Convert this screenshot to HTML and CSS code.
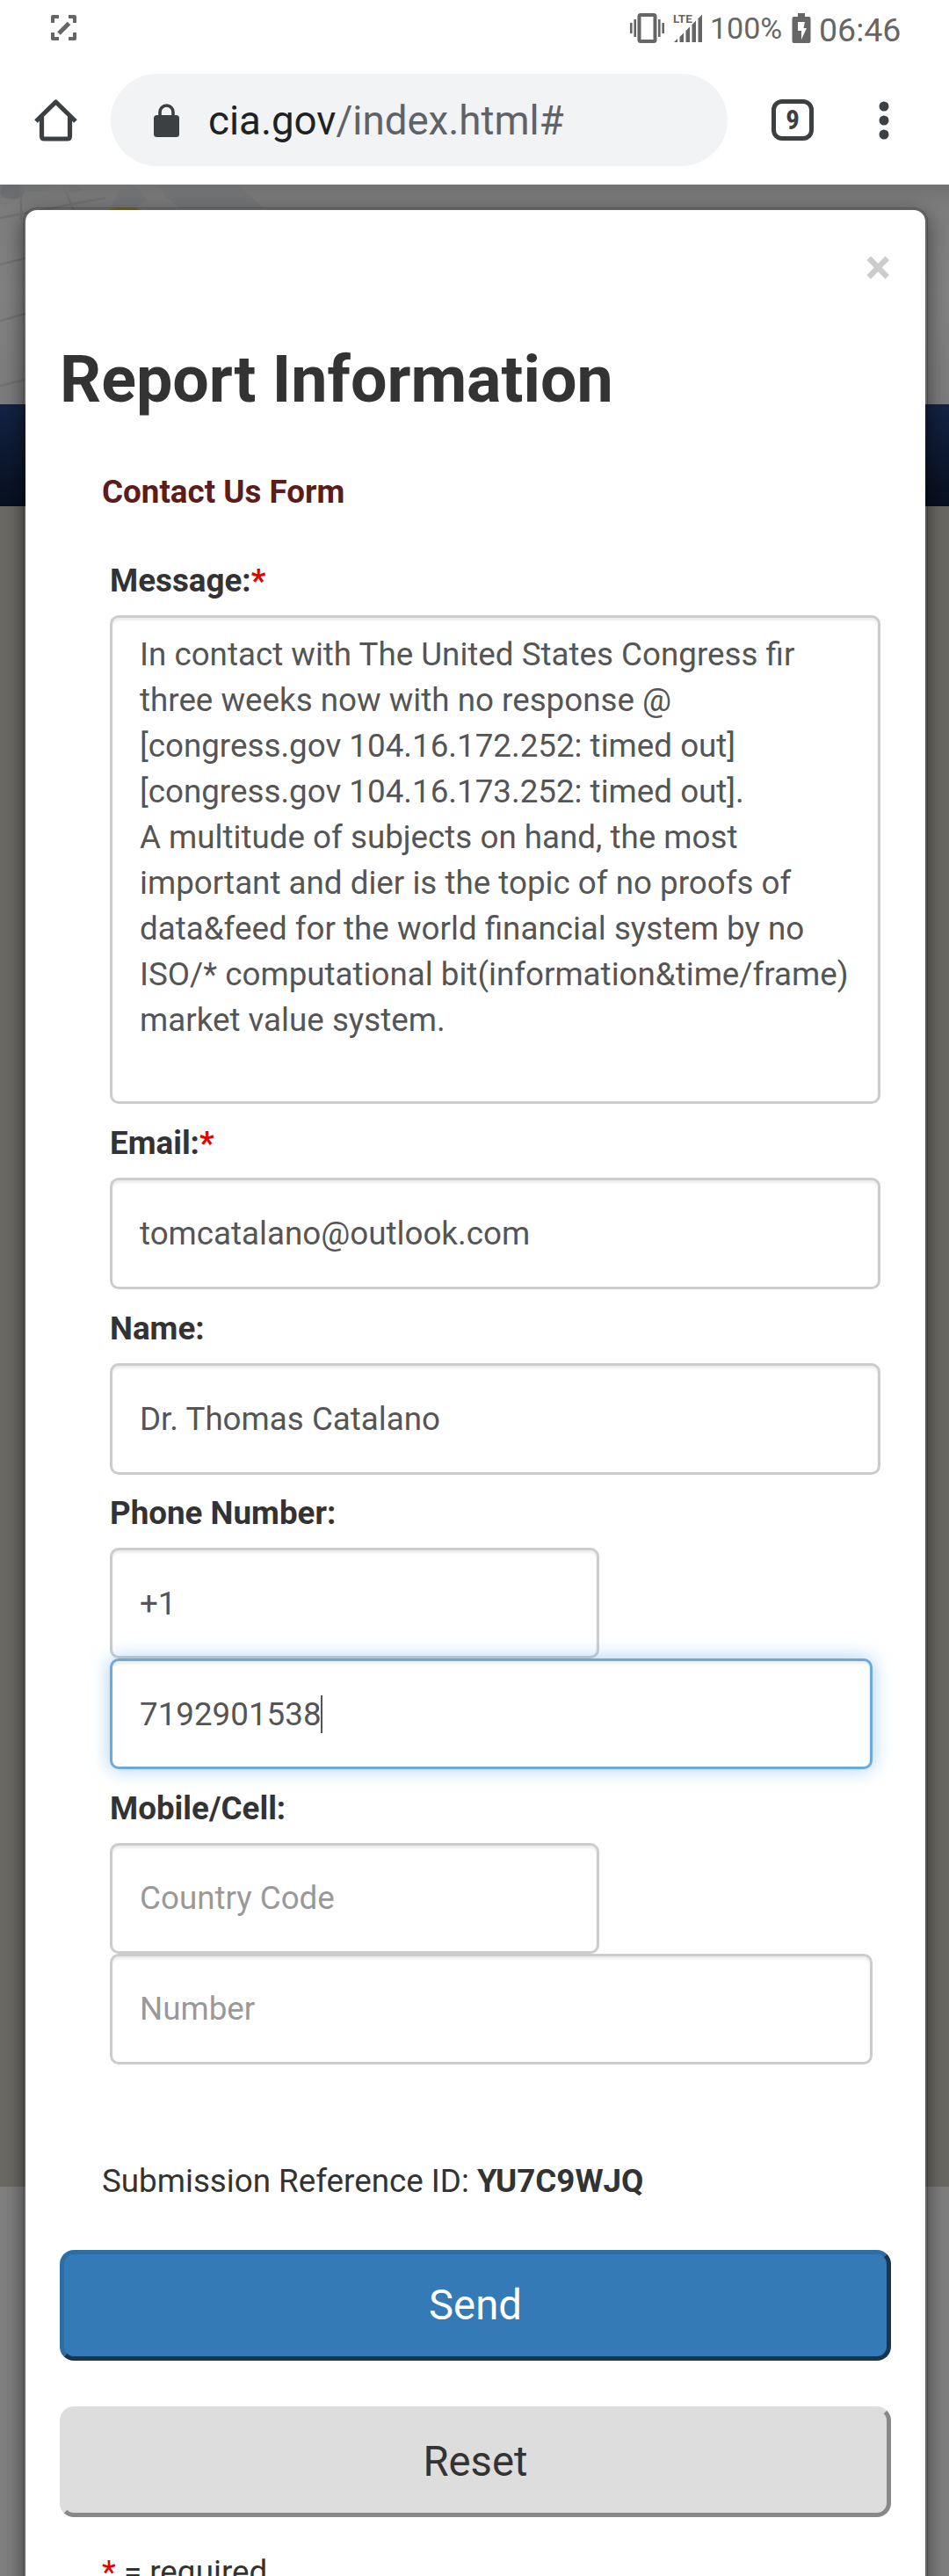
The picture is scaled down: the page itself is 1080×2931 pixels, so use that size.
FILE: index.html
```html
<!DOCTYPE html>
<html lang="en">
<head>
<meta charset="utf-8">
<title>Report Information</title>
<link rel="stylesheet" href="styles.css">
</head>
<body>
<header class="chrome">
  <div class="status">
    <svg class="capture" width="29" height="29" viewBox="0 0 29 29" fill="none" stroke="#666" stroke-width="4"><path d="M2 9V2h7M20 2h7v7M27 20v7h-7M9 27H2v-7" stroke-linejoin="round"/><path d="M9 21 20.500 9.500" stroke-width="5"/></svg>
    <svg class="vibrate" width="39" height="34" viewBox="0 0 39 34" fill="none" stroke="#666"><rect x="10.500" y="2" width="18" height="30" rx="1.500" stroke-width="4"/><path d="M1.300 11v12M5.700 7v20M33.300 7v20M37.700 11v12" stroke-width="2.600"/></svg>
    <svg class="signal" width="34" height="33" viewBox="0 0 34 33" fill="#666"><text x="0" y="10" class="lte">LTE</text><path d="M1 32 5 28v4zM7.500 26l4.500-4.500V32H7.500zM14.500 19l4.500-4.500V32h-4.500zM21.500 12 26 7.500V32h-4.500zM28.500 5 33 .5V32h-4.500z"/></svg>
    <span class="percent">100%</span>
    <svg class="battery" width="22" height="34" viewBox="0 0 22 34"><path fill="#666" d="M7 0h8v4h4.500q2 0 2 2v26q0 2-2 2h-17q-2 0-2-2V6q0-2 2-2H7z"/><path fill="#fff" d="M7 10h8l-1.500 7H17l-6 13v-10H7z"/></svg>
    <span class="time">06:46</span>
  </div>
  <div class="toolbar">
    <svg class="home" width="49" height="49" viewBox="0 0 49 49" fill="none" stroke="#3c4043" stroke-width="5.200"><path d="M2 26 24.500 4 47 26" stroke-linejoin="round"/><path d="M8.500 21v22q0 3 3 3h26q3 0 3-3V21"/></svg>
    <div class="omnibox">
      <svg class="lock" width="29" height="38" viewBox="0 0 29 38"><rect y="13" width="29" height="25" rx="3.500" fill="#3c4043"/><path d="M7 14V9.500a7.500 7.500 0 0 1 15 0V14" fill="none" stroke="#3c4043" stroke-width="3.600"/></svg>
      <span class="url">cia.gov<span class="path">/index.html#</span></span>
    </div>
    <div class="tabs">9</div>
    <svg class="dots" width="12" height="46" viewBox="0 0 12 46" fill="#3c4043"><circle cx="6" cy="7" r="5.500"/><circle cx="6" cy="23" r="5.500"/><circle cx="6" cy="39" r="5.500"/></svg>
  </div>
</header>
<main class="viewport">
  <div class="backdrop">
    <div class="banner">
      <svg width="310" height="250" viewBox="0 0 310 250" fill="none">
        <path d="M0 0h65L50 6 25 8 20 15H0zM75 0h15l4 7-16 2zM180 0h90l30 27H205l-15-12zM135 8l20-6 12 16-12 9h-30z" fill="#6b6c70" opacity=".35"/>
        <ellipse cx="14" cy="8" rx="13" ry="9" fill="#626368" opacity=".4"/>
        <path d="M0 38 120 15M0 91 40 81M0 155 40 144M0 229 40 219M24 0v40M72 0l12 30" stroke="#6e6f70" stroke-width="2.500" opacity=".8"/>
        <path d="M122 29q20-6 40 0z" fill="#77702f"/>
      </svg>
    </div>
    <div class="navband"></div>
    <div class="content"></div>
  </div>
  <section class="modal">
    <div class="close">×</div>
    <h1 class="title">Report Information</h1>
    <h2 class="subtitle">Contact Us Form</h2>
    <form class="form">
      <div class="group">
        <div class="label">Message:<span class="req">*</span></div>
        <div class="field area">In contact with The United States Congress fir
three weeks now with no response @
[congress.gov 104.16.172.252: timed out]
[congress.gov 104.16.173.252: timed out].
A multitude of subjects on hand, the most
important and dier is the topic of no proofs of
data&amp;feed for the world financial system by no
ISO/* computational bit(information&amp;time/frame)
market value system.</div>
      </div>
      <div class="group tall">
        <div class="label">Email:<span class="req">*</span></div>
        <div class="field">tomcatalano@outlook.com</div>
      </div>
      <div class="group tall last-tall">
        <div class="label">Name:</div>
        <div class="field">Dr. Thomas Catalano</div>
      </div>
      <div class="group phone">
        <div class="label">Phone Number:</div>
        <div class="field code">+1</div>
        <div class="field number focused">7192901538<span class="caret"></span></div>
      </div>
      <div class="group">
        <div class="label">Mobile/Cell:</div>
        <div class="field code placeholder">Country Code</div>
        <div class="field number placeholder">Number</div>
      </div>
    </form>
    <p class="reference">Submission Reference ID: <b>YU7C9WJQ</b></p>
    <div class="button send">Send</div>
    <div class="button reset">Reset</div>
    <p class="note"><span class="req">*</span> = required</p>
  </section>
</main>
</body>
</html>
```
FILE: styles.css
```css
* { box-sizing: border-box; }

body {
  margin: 0;
  width: 1080px;
  height: 2931px;
  overflow: hidden;
  background: #fff;
  color: #333;
  font: 36.75px/52px Roboto, sans-serif;
}

svg { display: block; flex: none; }

.chrome { height: 210px; background: #fff; }

.status {
  height: 63px;
  display: flex;
  align-items: flex-start;
  padding-left: 58px;
  color: #666;
}
.capture { margin-top: 17px; }
.vibrate { margin: 15px 0 0 630px; }
.signal { margin: 16px 0 0 10px; overflow: visible; }
.lte { font: bold 13.500px Roboto, sans-serif; }
.percent { width: 93px; margin: 12px 0 0 8px; font-size: 34px; line-height: 40px; }
.battery { margin-top: 15px; }
.time { margin: 12px 0 0 9px; font-size: 37.500px; line-height: 44px; }

.toolbar {
  height: 147px;
  display: flex;
  align-items: center;
  padding-left: 39px;
}
.omnibox {
  width: 702px;
  height: 105px;
  margin: 0 50px 0 38px;
  padding-left: 49px;
  border-radius: 53px;
  background: #f1f3f4;
  display: flex;
  align-items: center;
  gap: 33px;
}
.url { padding-top: 2px; color: #202124; font-size: 45.700px; line-height: 60px; }
.path { color: #5f6368; }
.tabs {
  width: 48px;
  height: 47px;
  border: 5px solid #3c4043;
  border-radius: 12px;
  color: #3c4043;
  font: bold 31px/37px "Roboto Condensed", Roboto, sans-serif;
  text-align: center;
}
.dots { margin-left: 74px; }

.viewport { position: relative; height: 2721px; overflow: hidden; }

.backdrop { height: 100%; background: #808080; }
.banner {
  height: 250px;
  background: linear-gradient(#727272, #7d7d7d 26px, #828282 120px, #7c7c7c);
}
.navband { height: 116px; background: linear-gradient(#142344, #07101f); }
.content { height: 1912px; background: #6c6a65; }

.modal {
  position: absolute;
  top: 26px;
  left: 26px;
  width: 1030px;
  height: 2800px;
  padding: 0 39px;
  border: 3px solid rgba(0, 0, 0, .2);
  border-radius: 16px;
  background: #fff;
  background-clip: padding-box;
  box-shadow: 0 8px 24px rgba(0, 0, 0, .5);
}
.close {
  height: 153px;
  padding: 35px 0 0;
  text-align: right;
  color: #ccc;
  font-size: 55px;
  line-height: 60px;
  font-weight: bold;
}
.title { margin: 0; font-size: 73.600px; line-height: 81px; font-weight: bold; }
.subtitle {
  margin: 61px 0 48px 48px;
  color: #5c1c1c;
  font-size: 36.750px;
  line-height: 52px;
}
.form { margin-left: 57px; }
.group { margin-bottom: 18px; }
.label { padding-top: 1px; margin-bottom: 13px; font-weight: bold; }
.req { color: #e60000; }
.field {
  width: 877px;
  height: 126px;
  padding: 0 31px;
  border: 3px solid #ccc;
  border-radius: 10px;
  background: #fff;
  box-shadow: inset 0 3px 3px rgba(0, 0, 0, .075);
  color: #555;
  line-height: 120px;
  white-space: pre;
}
.tall .field { height: 127px; line-height: 121px; }
.last-tall { margin-bottom: 17px; }
.phone .field { padding-top: 1px; }
.area { height: 556px; padding-top: 16px; line-height: 52px; }
.code { width: 557px; }
.number { width: 868px; }
.focused {
  border-color: #6caadd;
  box-shadow: inset 0 3px 3px rgba(0, 0, 0, .075), 0 0 21px rgba(102, 175, 233, .6);
}
.caret {
  display: inline-block;
  width: 2px;
  height: 43px;
  margin-left: -1px;
  background: #555;
  vertical-align: -9px;
}
.placeholder { color: #999; }

.reference { margin: 107px 0 0 48px; }
.button {
  width: 946px;
  height: 126px;
  border-radius: 16px;
  font-size: 47.250px;
  line-height: 116px;
  text-align: center;
}
.send {
  margin-top: 52px;
  border: 5px solid;
  border-color: #2e6da4 #16354f #16354f #2e6da4;
  background: #337ab7;
  color: #fff;
}
.reset {
  margin-top: 52px;
  border: 5px solid;
  border-color: #ddd #888 #888 #ddd;
  background: #ddd;
}
.note { margin: 37px 0 0 48px; }
```
